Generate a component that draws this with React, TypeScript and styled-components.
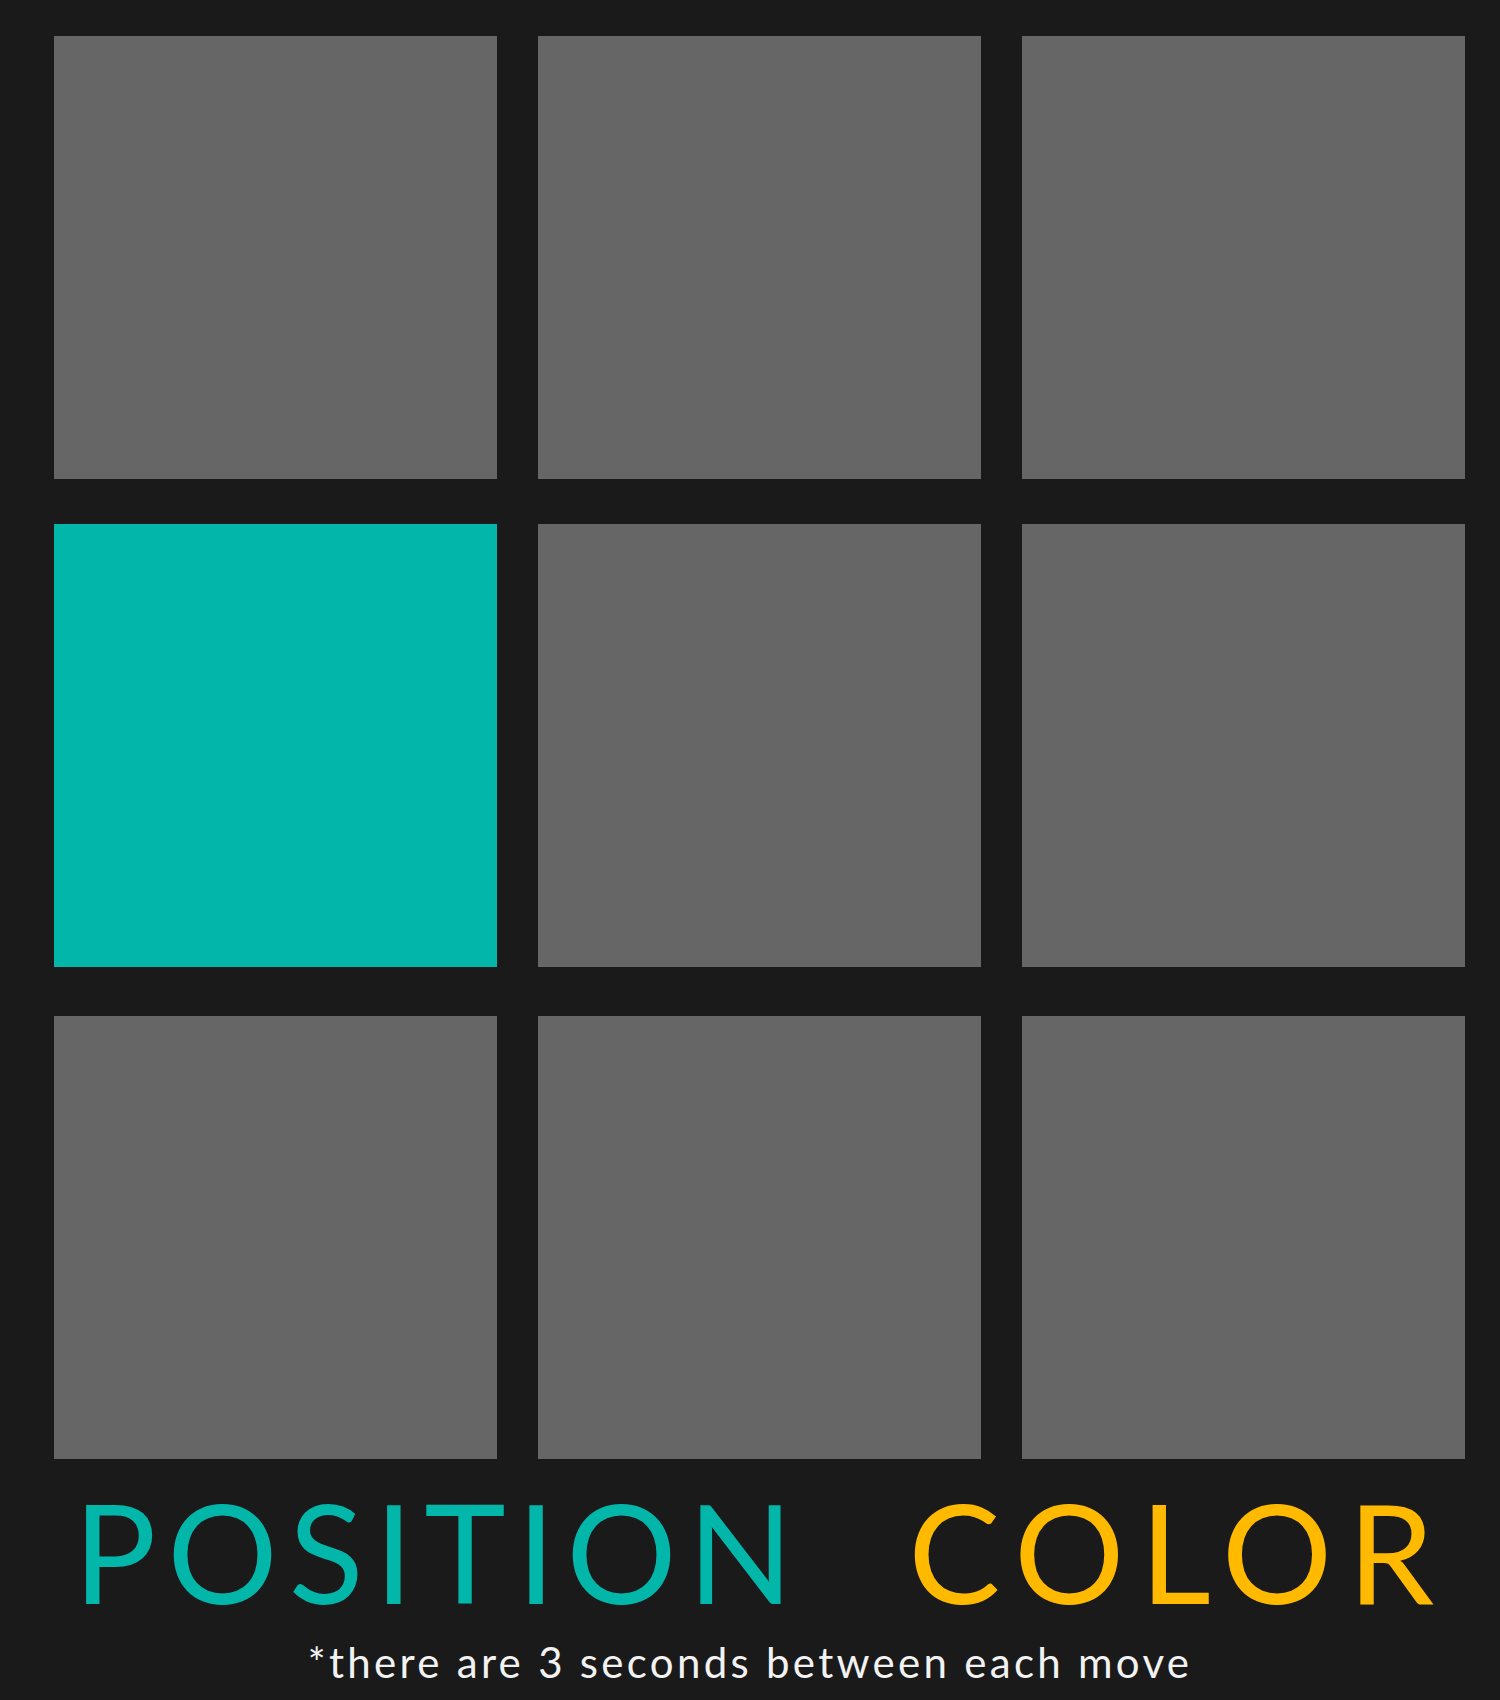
import React from "react";
import styled, { createGlobalStyle } from "styled-components";

const GlobalStyle = createGlobalStyle`
  html, body {
    margin: 0;
    padding: 0;
    background: #1a1a1a;
  }
  body {
    font-family: Lato, "Open Sans", sans-serif;
  }
`;

const Page = styled.main`
  width: 1500px;
  min-height: 1700px;
  box-sizing: border-box;
  padding: 36px 35px 0 54px;
  background: #1a1a1a;
`;

const Board = styled.div`
  display: flex;
  flex-direction: column;
  width: 1411px;
`;

const Row = styled.div<{ $spaceAfter: number }>`
  display: grid;
  grid-template-columns: repeat(3, 443px);
  column-gap: 41px;
  margin-bottom: ${(p) => p.$spaceAfter}px;
`;

const Cell = styled.div<{ $active?: boolean }>`
  width: 443px;
  height: 443px;
  background: ${(p) => (p.$active ? "#02b6aa" : "#666666")};
`;

const Labels = styled.div`
  display: flex;
  justify-content: center;
  align-items: baseline;
  gap: 104px;
  width: 1411px;
  box-sizing: border-box;
  padding-left: 4px;
  margin-top: 23px;
`;

const Label = styled.span<{ $color: string; $tracking: number }>`
  font-family: Lato, "Open Sans", sans-serif;
  font-weight: 400;
  font-size: 138px;
  line-height: 138px;
  color: ${(p) => p.$color};
  letter-spacing: ${(p) => p.$tracking}px;
`;

const Note = styled.p`
  margin: 21px 0 0 -54px;
  width: 1500px;
  text-align: center;
  font-family: Lato, "Open Sans", sans-serif;
  font-size: 42px;
  line-height: 42px;
  letter-spacing: 3.3px;
  color: #f2f2f2;
`;

const grid: boolean[][] = [
  [false, false, false],
  [true, false, false],
  [false, false, false],
];
const spacing = [45, 49, 0];

export default function App() {
  return (
    <>
      <GlobalStyle />
      <Page>
        <Board>
          {grid.map((row, r) => (
            <Row key={r} $spaceAfter={spacing[r]}>
              {row.map((active, c) => (
                <Cell key={c} $active={active} />
              ))}
            </Row>
          ))}
        </Board>
        <Labels>
          <Label $color="#02b6aa" $tracking={11}>
            POSITION
          </Label>
          <Label $color="#ffba00" $tracking={15.5}>
            COLOR
          </Label>
        </Labels>
        <Note>*there are 3 seconds between each move</Note>
      </Page>
    </>
  );
}
